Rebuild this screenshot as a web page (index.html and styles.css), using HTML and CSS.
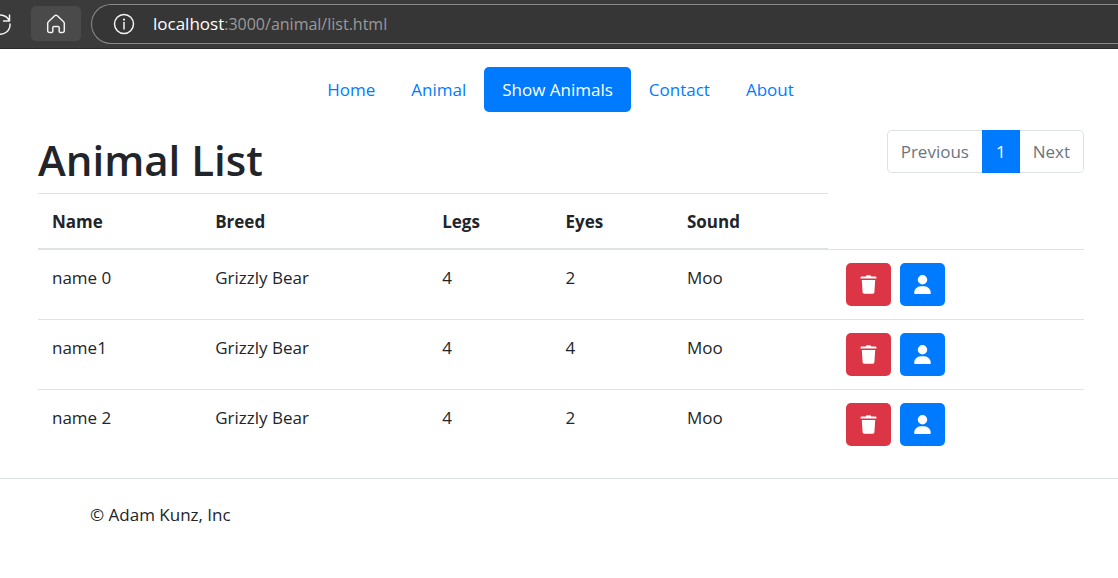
FILE: index.html
```html
<!DOCTYPE html>
<html lang="en">
<head>
<meta charset="utf-8">
<title>Animal List</title>
<link rel="stylesheet" href="styles.css">
</head>
<body>
<svg class="sprite" aria-hidden="true">
  <symbol id="trash" viewBox="0 0 17 19"><path d="M6 .9Q6.200.300 7 .3h3q.8 0 1 .6l.2.500H15.500q1 0 1 1v.7q0 .5-.5.500H1q-.5 0-.5-.5v-.7q0-1 1-1H5.800zM1.800 4.900h13.400l-.8 12.400q-.1 1.400-1.500 1.400H4.100q-1.400 0-1.500-1.400z"/></symbol>
  <symbol id="user" viewBox="0 0 448 512"><path d="M224 256a128 128 0 1 0 0-256 128 128 0 1 0 0 256zm-46 48C80 304 0 384 0 482c0 16 14 30 30 30h388c16 0 30-14 30-30 0-98-80-178-178-178z"/></symbol>
</svg>
<header class="toolbar">
  <button class="tool reload" aria-label="Reload">
    <svg class="tool-icon" viewBox="0 0 22 22"><path d="M19.500 2v6h-6M19.300 8A9.500 9.500 0 1 0 20 11"/></svg>
  </button>
  <button class="tool home" aria-label="Home page">
    <svg class="tool-icon" viewBox="0 0 22 22"><path d="M2.700 10.200a2 2 0 0 1 .7-1.500l6.300-5.900a2 2 0 0 1 2.600 0l6.300 5.900a2 2 0 0 1 .7 1.500v7.600a1.800 1.800 0 0 1-1.800 1.800h-2a1.300 1.300 0 0 1-1.300-1.300v-3.500a1.300 1.300 0 0 0-1.300-1.300H9.100a1.300 1.300 0 0 0-1.300 1.300v3.500a1.300 1.300 0 0 1-1.300 1.300h-2a1.800 1.800 0 0 1-1.800-1.800z"/></svg>
  </button>
  <div class="address">
    <svg class="tool-icon" viewBox="0 0 22 22"><circle cx="11" cy="11" r="9.500"/><path d="M11 9.500v6.500"/><circle class="dot" cx="11" cy="6.600" r="1.100"/></svg>
    <span class="url"><span class="host">localhost</span>:3000/animal/list.html</span>
  </div>
</header>
<nav class="nav">
  <a class="nav-link" href="#">Home</a>
  <a class="nav-link" href="#">Animal</a>
  <a class="nav-link active" href="#" aria-current="page">Show Animals</a>
  <a class="nav-link" href="#">Contact</a>
  <a class="nav-link" href="#">About</a>
</nav>
<main class="content">
  <div class="heading">
    <h1 class="title">Animal List</h1>
    <div class="pagination">
      <a class="page" href="#">Previous</a>
      <a class="page current" href="#" aria-current="page">1</a>
      <a class="page" href="#">Next</a>
    </div>
  </div>
  <table class="animals">
    <colgroup><col class="col-name"><col class="col-breed"><col class="col-legs"><col class="col-eyes"><col class="col-sound"><col></colgroup>
    <thead>
      <tr><th>Name</th><th>Breed</th><th>Legs</th><th>Eyes</th><th>Sound</th></tr>
    </thead>
    <tbody>
      <tr><td>name 0</td><td>Grizzly Bear</td><td>4</td><td>2</td><td>Moo</td>
        <td><div class="actions"><button class="btn danger" aria-label="Delete name 0"><svg class="icon"><use href="#trash"/></svg></button><button class="btn primary" aria-label="View name 0"><svg class="icon"><use href="#user"/></svg></button></div></td></tr>
      <tr><td>name1</td><td>Grizzly Bear</td><td>4</td><td>4</td><td>Moo</td>
        <td><div class="actions"><button class="btn danger" aria-label="Delete name1"><svg class="icon"><use href="#trash"/></svg></button><button class="btn primary" aria-label="View name1"><svg class="icon"><use href="#user"/></svg></button></div></td></tr>
      <tr><td>name 2</td><td>Grizzly Bear</td><td>4</td><td>2</td><td>Moo</td>
        <td><div class="actions"><button class="btn danger" aria-label="Delete name 2"><svg class="icon"><use href="#trash"/></svg></button><button class="btn primary" aria-label="View name 2"><svg class="icon"><use href="#user"/></svg></button></div></td></tr>
    </tbody>
  </table>
</main>
<footer class="footer">© Adam Kunz, Inc</footer>
</body>
</html>
```
FILE: styles.css
```css
* { box-sizing: border-box; }
body {
  margin: 0;
  background: #fff;
  color: #212529;
  font: 17px/27px "Segoe UI", "Open Sans", "Noto Sans", sans-serif;
  overflow-x: hidden;
}
a { text-decoration: none; }
button { font: inherit; border: 0; padding: 0; cursor: pointer; }
.sprite { display: none; }

.toolbar {
  display: flex;
  align-items: center;
  height: 49px;
  padding-bottom: 1px;
  background: #3b3b3b;
  border-bottom: 1px solid #2b2b2b;
}
.tool {
  display: flex;
  flex: none;
  align-items: center;
  justify-content: center;
  height: 35px;
  border-radius: 5px;
  background: transparent;
}
.reload { width: 31px; justify-content: flex-start; margin-left: -10px; margin-right: 10px; }
.home { width: 50px; background: #4a4a4a; }
.tool-icon {
  flex: none;
  width: 22px;
  height: 22px;
  fill: none;
  stroke: #f2f2f2;
  stroke-width: 1.500;
  stroke-linecap: round;
  stroke-linejoin: round;
}
.dot { fill: #f2f2f2; stroke: none; }
.address {
  display: flex;
  flex: 1;
  align-items: center;
  gap: 18px;
  height: 40px;
  margin-left: 10px;
  padding-left: 21px;
  border: 1px solid #8a8a8a;
  border-right: 0;
  border-radius: 20px 0 0 20px;
  background: #363636;
}
.url { color: #9a9a9a; font-size: 16px; }
.host { color: #fff; font-size: 17px; }

.nav {
  display: flex;
  justify-content: center;
  padding: 18px 0 18px 3px;
}
.nav-link {
  padding: 9px 18px;
  border-radius: 5px;
  color: #007bff;
}
.nav-link.active { background: #007bff; color: #fff; }

.content { padding: 0 34px 19px 38px; }
.heading {
  display: flex;
  justify-content: space-between;
  align-items: flex-start;
}
.title {
  margin: 0;
  padding: 3px 0 6px;
  font-size: 42px;
  line-height: 54px;
  font-weight: 600;
}
.pagination { display: flex; }
.page {
  padding: 7px 13px;
  border: 1px solid #dee2e6;
  color: #6c757d;
}
.page:first-child { border-right: 0; border-radius: 5px 0 0 5px; }
.page:last-child { border-left: 0; border-radius: 0 5px 5px 0; }
.page.current { background: #007bff; border-color: #007bff; color: #fff; }

.animals {
  width: 100%;
  table-layout: fixed;
  border-spacing: 0;
}
.col-name { width: 15.600%; }
.col-breed { width: 21.700%; }
.col-legs { width: 11.800%; }
.col-eyes { width: 11.600%; }
.col-sound { width: 14.800%; }
.animals th, .animals td {
  padding: 14px 14px 13px;
  border-top: 1px solid #dee2e6;
  text-align: left;
  vertical-align: top;
}
.animals th { border-bottom: 1px solid #dee2e6; font-weight: 700; }
.animals td:last-child { padding: 13px 14px; }
.actions { display: flex; gap: 9px; padding-left: 4px; }
.btn {
  display: flex;
  align-items: center;
  justify-content: center;
  width: 45px;
  height: 43px;
  border-radius: 5px;
  color: #fff;
}
.danger { background: #dc3545; }
.primary { background: #007bff; }
.icon { width: 17px; height: 19px; fill: currentColor; }

.footer {
  padding: 22px 90px;
  border-top: 1px solid #dee2e6;
}
```
